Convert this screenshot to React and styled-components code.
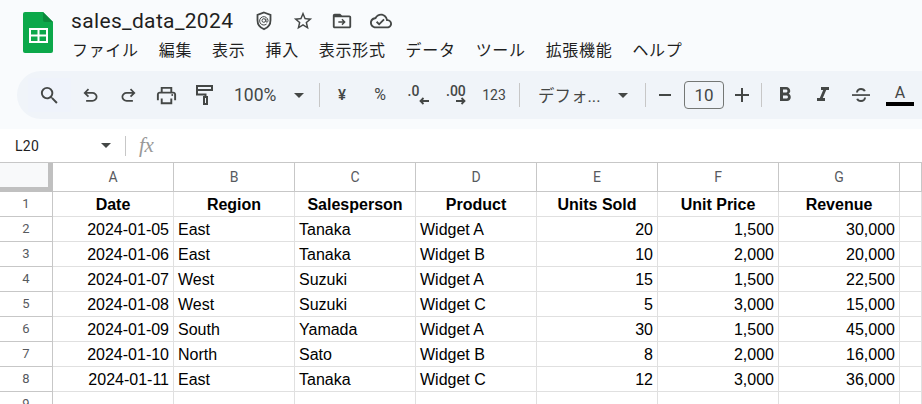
import React from 'react';
import styled, { createGlobalStyle } from 'styled-components';

const Global = createGlobalStyle`
  html, body { margin: 0; padding: 0; width: 922px; height: 404px; overflow: hidden; background: #fff; }
  * { box-sizing: border-box; }
`;

const Page = styled.div`
  width: 922px; height: 404px; overflow: hidden; display: flex; flex-direction: column;
  font-family: Roboto, "Noto Sans CJK JP", sans-serif; color: #444746;
`;
const Chrome = styled.div`
  height: 129px; background: #f9fbfd; flex: none; display: flex; flex-direction: column; padding-left: 17px;
`;
const Header = styled.header`
  height: 71px; display: flex; flex: none; padding: 12px 0 0 6px;
`;
const LogoWrap = styled.div`
  width: 30px; height: 41px; flex: none; margin-right: 18px;
`;
const TitleColumn = styled.div`
  display: flex; flex-direction: column;
`;
const TitleRow = styled.div`
  display: flex; align-items: center; height: 20px; margin-top: -1px;
`;
const DocTitle = styled.div`
  font: 400 21px/20px Roboto, sans-serif; color: #1f1f1f; width: 161px; letter-spacing: .35px; white-space: nowrap;
`;
const TitleIcons = styled.div`
  display: flex; align-items: center; margin-left: 12.5px;
`;
const TitleIcon = styled.div`
  width: 39px; display: flex; justify-content: center; align-items: center; color: #444746;
`;
const MenuBar = styled.nav`
  display: flex; gap: 20px; margin: 8px 0 0 1px; font: 400 16px/20px "Noto Sans CJK JP", sans-serif;
  color: #1f1f1f; letter-spacing: .68px;
`;
const MenuItem = styled.span`white-space: nowrap;`;

const Toolbar = styled.div`
  height: 48px; flex: none; width: 905px; background: #f0f4f9; border-radius: 24px 0 0 24px;
  display: flex; align-items: center; padding-left: 11px; color: #444746;
`;
const ToolButton = styled.div`
  width: ${p => p.$w || 38}px; height: 34px; flex: none; display: flex; align-items: center; justify-content: center;
  background: ${p => p.$tint ? '#eff3fb' : 'transparent'}; color: #444746;
`;
const Select = styled.div`
  width: ${p => p.$w}px; height: 34px; flex: none; display: flex; align-items: center; justify-content: space-between;
  padding: 0 ${p => p.$pr}px 0 ${p => p.$pl}px; font-size: ${p => p.$size}px; color: #444746; white-space: nowrap;
`;
const Caret = styled.span`
  width: 0; height: 0; border-left: 5px solid transparent; border-right: 5px solid transparent; border-top: 5px solid #444746;
`;
const Sep = styled.div`
  width: 1px; height: 24px; background: #c7c7c7; flex: none; margin: 0 ${p => p.$r}px 0 ${p => p.$l}px;
`;
const Glyph = styled.span`
  font: ${p => p.$weight || 400} ${p => p.$size}px/1 Roboto, sans-serif; color: #444746;
`;
const DecimalWrap = styled.div`
  display: flex; flex-direction: column; width: ${p => p.$w}px;
`;
const DecimalText = styled.span`
  font: 500 14px/12px Roboto, sans-serif; color: #444746; align-self: flex-start;
`;
const DecimalArrow = styled.svg`
  align-self: flex-end; flex: none;
`;
const SizeBox = styled.div`
  width: 40px; height: 28px; flex: none; border: 1px solid #747775; border-radius: 4px;
  display: flex; align-items: center; justify-content: center; font-size: 17px; color: #444746;
`;
const TextColor = styled.div`
  width: 38px; display: flex; flex-direction: column; align-items: center; flex: none; margin-left: 1px;
`;
const ColorLetter = styled.span`
  font: 400 16px/17px Roboto, sans-serif; color: #444746;
`;
const ColorBar = styled.span`
  width: 28px; height: 4px; background: #000; margin-top: 1px;
`;

const FormulaBar = styled.div`
  height: 33px; flex: none; background: #fff; display: flex; align-items: center; padding-left: 15px;
`;
const NameBox = styled.div`
  width: 96px; font: 400 14px/20px Roboto, sans-serif; color: #1f1f1f; display: flex; justify-content: space-between; align-items: center; letter-spacing: .3px;
`;
const FormulaSep = styled.div`
  width: 1px; height: 20px; background: #c7c7c7; margin: 0 13px 0 14px;
`;
const Fx = styled.span`
  font: italic 400 21px/20px "Liberation Serif", serif; color: #999999; letter-spacing: -.3px; margin-top: -2px;
`;

const Sheet = styled.div`
  flex: 1; min-height: 0; display: grid; overflow: hidden;
  grid-template-columns: 53px repeat(7, 121px) 1fr;
  grid-auto-rows: 25px; grid-template-rows: 29px;
  border-top: 1px solid #c7c7c7; font-family: "Liberation Sans", Arial, sans-serif;
`;
const Corner = styled.div`
  background: #f8f9fa; border-right: 5px solid #c0c0c0; border-bottom: 5px solid #c0c0c0;
`;
const ColHead = styled.div`
  border-right: 1px solid #c7c7c7; border-bottom: 1px solid #c7c7c7; display: flex; align-items: center; justify-content: center;
  font: 400 14px Roboto, sans-serif; color: #575a5e;
`;
const RowHead = styled.div`
  border-right: 1px solid #c7c7c7; border-bottom: 1px solid #c7c7c7; display: flex; align-items: flex-start; justify-content: center;
  padding-top: 4px; font: 400 13px/16px Roboto, sans-serif; color: #575a5e;
`;
const Cell = styled.div`
  border-right: 1px solid #e0e0e0; border-bottom: 1px solid #e0e0e0; padding: 0 4px; font-size: 16px; line-height: 26px; color: #000;
  text-align: ${p => p.$align || 'left'}; font-weight: ${p => p.$bold ? 700 : 400}; white-space: nowrap; overflow: hidden;
`;

const Svg = ({ size = 20, box = 24, children, ...rest }) => (
  <svg width={size} height={size} viewBox={`0 0 ${box} ${box}`} fill="currentColor" {...rest}>{children}</svg>
);

const Logo = () => (
  <svg width="30" height="41" viewBox="0 0 30 41">
    <path d="M2 0h18l10 10v29a2 2 0 0 1-2 2H2a2 2 0 0 1-2-2V2a2 2 0 0 1 2-2z" fill="#0ca84a" />
    <path d="M20 0l10 10H22a2 2 0 0 1-2-2z" fill="#0b8a3c" />
    <path fillRule="evenodd" d="M6 16h19v15H6zM8 18v4.500h6.500V18zm8.500 0v4.500H23V18zM8 24.500V29h6.500v-4.500zm8.500 0V29H23v-4.500z" fill="#fff" />
  </svg>
);

const rows = [
  ['2024-01-05', 'East', 'Tanaka', 'Widget A', '20', '1,500', '30,000'],
  ['2024-01-06', 'East', 'Tanaka', 'Widget B', '10', '2,000', '20,000'],
  ['2024-01-07', 'West', 'Suzuki', 'Widget A', '15', '1,500', '22,500'],
  ['2024-01-08', 'West', 'Suzuki', 'Widget C', '5', '3,000', '15,000'],
  ['2024-01-09', 'South', 'Yamada', 'Widget A', '30', '1,500', '45,000'],
  ['2024-01-10', 'North', 'Sato', 'Widget B', '8', '2,000', '16,000'],
  ['2024-01-11', 'East', 'Tanaka', 'Widget C', '12', '3,000', '36,000'],
];
const heads = ['Date', 'Region', 'Salesperson', 'Product', 'Units Sold', 'Unit Price', 'Revenue'];
const cols = ['A', 'B', 'C', 'D', 'E', 'F', 'G'];
const menus = ['ファイル', '編集', '表示', '挿入', '表示形式', 'データ', 'ツール', '拡張機能', 'ヘルプ'];
const alignOf = i => (i === 0 || i >= 4 ? 'right' : 'left');
const UNDO = "M7 19v-2h7.100q1.575 0 2.737-1T18 13.500q0-1.500-1.163-2.500T14.100 10H7.800l2.600 2.600L9 14 4 9l5-5 1.400 1.400L7.800 8h6.300q2.425 0 4.163 1.575T20 13.500q0 2.350-1.738 3.925T14.100 19H7z";

export default function App() {
  return (
    <Page>
      <Global />
      <Chrome>
        <Header>
          <LogoWrap><Logo /></LogoWrap>
          <TitleColumn>
            <TitleRow>
              <DocTitle>sales_data_2024</DocTitle>
              <TitleIcons>
                <TitleIcon>
                  <Svg size={24}>
                    <path d="M12 3.500l6.500 2.400v5.300c0 4.200-2.700 7.500-6.500 9-3.800-1.500-6.500-4.800-6.500-9V5.900z" fill="none" stroke="currentColor" strokeWidth="1.800" />
                    <circle cx="11.800" cy="11.500" r="1.800" fill="none" stroke="currentColor" strokeWidth="1" />
                    <path d="M14.600 15A4.200 4.200 0 1 1 16 11.500c0 1.100-.5 1.700-1.100 1.700s-1-.5-1-1.200V9.500" fill="none" stroke="currentColor" strokeWidth="1" />
                  </Svg>
                </TitleIcon>
                <TitleIcon>
                  <Svg size={22}>
                    <path d="M22 9.240l-7.190-.620L12 2 9.190 8.630 2 9.240l5.460 4.730L5.820 21 12 17.270 18.180 21l-1.630-7.030L22 9.240zM12 15.400l-3.760 2.270 1-4.280-3.320-2.880 4.380-.380L12 6.100l1.710 4.040 4.380.380-3.320 2.880 1 4.280L12 15.400z" />
                  </Svg>
                </TitleIcon>
                <TitleIcon>
                  <Svg size={22}>
                    <path d="M20 6h-8l-2-2H4c-1.100 0-2 .9-2 2v12c0 1.100.9 2 2 2h16c1.100 0 2-.9 2-2V8c0-1.100-.9-2-2-2zm0 12H4V8h16v10z" />
                    <path d="M12.500 9.500l-1.100 1.100 1.600 1.600H8v1.600h5l-1.600 1.600 1.100 1.100 3.500-3.500z" />
                  </Svg>
                </TitleIcon>
                <TitleIcon>
                  <Svg size={22}>
                    <path d="M19.350 10.040C18.670 6.590 15.640 4 12 4 9.110 4 6.600 5.640 5.350 8.040 2.340 8.360 0 10.910 0 14c0 3.310 2.690 6 6 6h13c2.760 0 5-2.240 5-5 0-2.640-2.050-4.780-4.650-4.960zM19 18H6c-2.210 0-4-1.790-4-4 0-2.050 1.530-3.760 3.560-3.970l1.070-.110.500-.950C8.080 7.140 9.940 6 12 6c2.620 0 4.880 1.860 5.390 4.430l.300 1.500 1.530.110c1.560.100 2.780 1.410 2.780 2.960 0 1.650-1.350 3-3 3zm-9-3.820l-2.090-2.090L6.500 13.500 10 17l6.010-6.010-1.410-1.410z" />
                  </Svg>
                </TitleIcon>
              </TitleIcons>
            </TitleRow>
            <MenuBar>
              {menus.map(m => <MenuItem key={m}>{m}</MenuItem>)}
            </MenuBar>
          </TitleColumn>
        </Header>
        <Toolbar>
          <ToolButton $w={43} $tint>
            <Svg size={23}><path d="M15.500 14h-.790l-.280-.270A6.471 6.471 0 0 0 16 9.500 6.500 6.500 0 1 0 9.500 16c1.610 0 3.090-.590 4.230-1.570l.270.280v.790l5 4.990L20.490 19l-4.990-5zm-6 0C7.010 14 5 11.990 5 9.500S7.010 5 9.500 5 14 7.010 14 9.500 11.990 14 9.500 14z" /></Svg>
          </ToolButton>
          <ToolButton>
            <Svg size={21}><path d={UNDO} /></Svg>
          </ToolButton>
          <ToolButton>
            <Svg size={21}><path transform="matrix(-1 0 0 1 24 0)" d={UNDO} /></Svg>
          </ToolButton>
          <ToolButton>
            <Svg size={23}><path d="M19 8h-1V3H6v5H5c-1.660 0-3 1.340-3 3v6h4v4h12v-4h4v-6c0-1.660-1.340-3-3-3zM8 5h8v3H8V5zm8 14H8v-4h8v4zm2-2v-2H6v2H4v-6c0-.550.450-1 1-1h14c.550 0 1 .450 1 1v6h-2z" /><circle cx="18" cy="11.500" r="1" /></Svg>
          </ToolButton>
          <ToolButton>
            <Svg size={24}><path d="M5 3h15v4H5zM5 7v4.500h8.500V14M12 14h3v7h-3z" fill="none" stroke="currentColor" strokeWidth="2" /></Svg>
          </ToolButton>
          <Select $w={87} $pl={11} $pr={6} $size={17.500}>100%<Caret /></Select>
          <Sep $l={9} $r={3} />
          <ToolButton><Glyph $size={15} $weight={500}>¥</Glyph></ToolButton>
          <ToolButton><Glyph $size={16}>%</Glyph></ToolButton>
          <ToolButton>
            <DecimalWrap $w={21}>
              <DecimalText>.0</DecimalText>
              <DecimalArrow width="10" height="8" viewBox="0 0 10 8"><path d="M10 4H1.500M4.500 1l-3 3 3 3" fill="none" stroke="#444746" strokeWidth="1.800" /></DecimalArrow>
            </DecimalWrap>
          </ToolButton>
          <ToolButton>
            <DecimalWrap $w={20}>
              <DecimalText>.00</DecimalText>
              <DecimalArrow width="10" height="8" viewBox="0 0 10 8"><path d="M0 4h8.500M5.500 1l3 3-3 3" fill="none" stroke="#444746" strokeWidth="1.800" /></DecimalArrow>
            </DecimalWrap>
          </ToolButton>
          <ToolButton><Glyph $size={14}>123</Glyph></ToolButton>
          <Sep $l={6} $r={0} />
          <Select $w={125} $pl={18} $pr={17} $size={16.500}>デフォ...<Caret /></Select>
          <Sep $l={0} $r={0} />
          <ToolButton><Svg size={24}><path d="M6 11h12v2H6z" /></Svg></ToolButton>
          <SizeBox>10</SizeBox>
          <ToolButton $w={36}><Svg size={24}><path d="M19 13h-6v6h-2v-6H5v-2h6V5h2v6h6z" /></Svg></ToolButton>
          <Sep $l={1} $r={4} />
          <ToolButton><Svg size={24}><path d="M15.600 10.790c.970-.670 1.650-1.770 1.650-2.790 0-2.260-1.750-4-4-4H7v14h7.040c2.090 0 3.710-1.700 3.710-3.790 0-1.520-.860-2.820-2.150-3.420zM10 6.500h3c.830 0 1.500.670 1.500 1.500s-.670 1.500-1.500 1.500h-3v-3zm3.500 9H10v-3h3.500c.830 0 1.500.670 1.500 1.500s-.670 1.500-1.500 1.500z" /></Svg></ToolButton>
          <ToolButton><Svg size={24}><path d="M10 4v3h2.210l-3.420 8H6v3h8v-3h-2.210l3.420-8H18V4z" /></Svg></ToolButton>
          <ToolButton>
            <Svg size={24}>
              <path d="M3 11.200h18v1.700H3z" />
              <path d="M8 9.500c0-2 1.800-3.500 4-3.500 1.800 0 3.300.8 3.800 2.300M16 14.500c0 2-1.800 3.500-4 3.500-1.800 0-3.300-.8-3.800-2.300" fill="none" stroke="currentColor" strokeWidth="2" />
            </Svg>
          </ToolButton>
          <TextColor>
            <ColorLetter>A</ColorLetter>
            <ColorBar />
          </TextColor>
        </Toolbar>
      </Chrome>
      <FormulaBar>
        <NameBox>L20<Caret /></NameBox>
        <FormulaSep />
        <Fx>fx</Fx>
      </FormulaBar>
      <Sheet>
        <Corner />
        {cols.map(c => <ColHead key={c}>{c}</ColHead>)}
        <ColHead />
        <RowHead>1</RowHead>
        {heads.map(h => <Cell key={h} $bold $align="center">{h}</Cell>)}
        <Cell />
        {rows.map((r, i) => (
          <React.Fragment key={i}>
            <RowHead>{i + 2}</RowHead>
            {r.map((v, j) => <Cell key={j} $align={alignOf(j)}>{v}</Cell>)}
            <Cell />
          </React.Fragment>
        ))}
        <RowHead>9</RowHead>
        {cols.map(c => <Cell key={c} />)}
        <Cell />
      </Sheet>
    </Page>
  );
}
